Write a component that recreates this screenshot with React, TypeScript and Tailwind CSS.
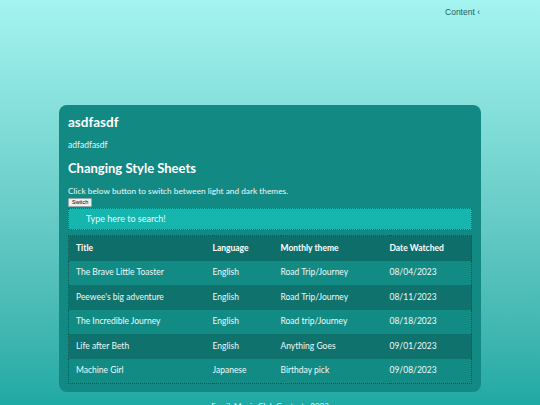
const movies = [
  { title: 'The Brave Little Toaster', language: 'English', theme: 'Road Trip/Journey', date: '08/04/2023' },
  { title: "Peewee's big adventure", language: 'English', theme: 'Road Trip/Journey', date: '08/11/2023' },
  { title: 'The Incredible Journey', language: 'English', theme: 'Road trip/Journey', date: '08/18/2023' },
  { title: 'Life after Beth', language: 'English', theme: 'Anything Goes', date: '09/01/2023' },
  { title: 'Machine Girl', language: 'Japanese', theme: 'Birthday pick', date: '09/08/2023' },
];

export default function App() {
  return (
    <div
      className="min-h-[405px] w-[540px] overflow-hidden bg-gradient-to-b from-[#a4f4f0] to-[#1aa8a3] text-white"
      style={{ fontFamily: 'Lato, "Noto Sans", sans-serif' }}
    >
      {/* top nav */}
      <div className="flex h-[105px] justify-end pr-[60px] pt-[6px]">
        <span className="text-[8.5px] leading-[12px] text-[#1d5f5b]" style={{ fontFamily: '"Liberation Sans", Arial, sans-serif' }}>
          Content ‹
        </span>
      </div>

      {/* main card */}
      <div className="mx-[59px] rounded-[8px] bg-[#128983] px-[9px] pt-[8px] pb-[8px]">
        <h1 className="text-[13.5px] leading-[18px] font-bold">asdfasdf</h1>
        <p className="mt-[8px] text-[8.5px] leading-[12px] text-[#e6f7f6]">adfadfasdf</p>
        <h2 className="mt-[7px] text-[13px] leading-[20px] font-bold">Changing Style Sheets</h2>
        <p className="mt-[7px] text-[8.3px] leading-[12px] text-[#eefaf9]">
          Click below button to switch between light and dark themes.
        </p>
        <button
          className="mt-px block rounded-[1px] border border-[#9aa] bg-[#efefef] px-[3px] text-[5.5px] leading-[7px] text-black"
          style={{ fontFamily: '"Liberation Sans", Arial, sans-serif' }}
        >
          Switch
        </button>
        <div className="mt-px flex h-[22px] items-center border border-dotted border-[#0d6e69] bg-[#16b5ae] pl-[17px]">
          <span className="text-[9px] text-[#e9fbfa]">Type here to search!</span>
        </div>

        <table className="mt-[5px] w-full table-fixed border border-dotted border-[#0b5c58] text-left text-[8.5px]">
          <colgroup>
            <col className="w-[144px]" />
            <col className="w-[68px]" />
            <col className="w-[109px]" />
            <col />
          </colgroup>
          <thead>
            <tr className="h-[25px] bg-[#0e6f6a]">
              <th className="pl-[7px] font-bold">Title</th>
              <th className="font-bold">Language</th>
              <th className="font-bold">Monthly theme</th>
              <th className="font-bold">Date Watched</th>
            </tr>
          </thead>
          <tbody>
            {movies.map((m, i) => (
              <tr key={m.title} className={i % 2 === 0 ? 'h-[24.5px] bg-[#138b85]' : 'h-[24.5px] bg-[#0f726d]'}>
                <td className="pl-[7px] text-[#eefaf9]">{m.title}</td>
                <td className="text-[#eefaf9]">{m.language}</td>
                <td className="text-[#eefaf9]">{m.theme}</td>
                <td className="text-[#eefaf9]">{m.date}</td>
              </tr>
            ))}
          </tbody>
        </table>
      </div>

      <p className="mt-[9px] text-center text-[8px] leading-[10px] text-[#e6f7f6]">Email: Movie Club Contact · 2023</p>
    </div>
  );
}
